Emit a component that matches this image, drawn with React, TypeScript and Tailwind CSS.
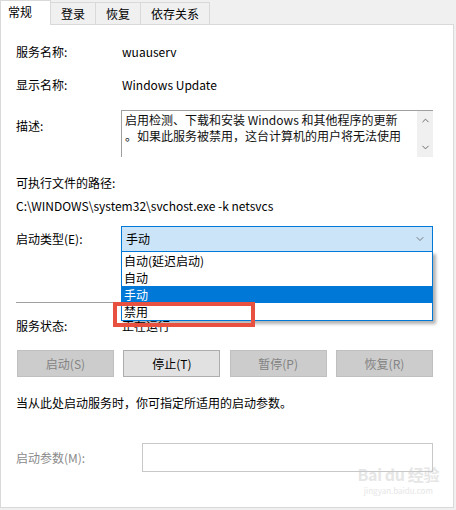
import { ChevronDown, ChevronUp } from "lucide-react";

const font = { fontFamily: '"Noto Sans CJK SC", "Noto Sans", sans-serif' };

function Tab({ label, active }: { label: string; active?: boolean }) {
  if (active) {
    return (
      <div className="h-[25px] w-[51px] bg-white border-l border-t border-r border-[#d9d9d9] pl-[7px] pt-[3px] z-10 -mb-px">
        {label}
      </div>
    );
  }
  return (
    <div className="mt-[2px] h-[22px] px-[10px] bg-[#f0f0f0] border-t border-r border-[#d9d9d9] flex items-center">
      {label}
    </div>
  );
}

function Btn({ label, disabled }: { label: string; disabled?: boolean }) {
  return (
    <div
      className={
        disabled
          ? "w-[97px] h-[27px] flex items-center justify-center bg-[#cccccc] border border-[#bfbfbf] text-[#838383]"
          : "w-[97px] h-[27px] flex items-center justify-center bg-[#e1e1e1] border border-[#adadad] text-black"
      }
    >
      {label}
    </div>
  );
}

export default function App() {
  return (
    <div className="w-[456px] h-[510px] bg-[#f0f0f0] text-[12px] text-black leading-[16px] overflow-hidden" style={font}>
      {/* tabs */}
      <div className="flex h-[24px]">
        <Tab label="常规" active />
        <Tab label="登录" />
        <Tab label="恢复" />
        <Tab label="依存关系" />
      </div>

      {/* panel */}
      <div className="w-[454px] h-[484px] bg-white border border-[#d9d9d9] pl-[15px] pr-[20px] flex flex-col">
        <div className="mt-[19px] flex h-[16px] items-center">
          <div className="w-[106px]">服务名称:</div>
          <div>wuauserv</div>
        </div>
        <div className="mt-[17px] flex h-[16px] items-center">
          <div className="w-[106px]">显示名称:</div>
          <div>Windows Update</div>
        </div>

        <div className="mt-[17px] flex h-[47px]">
          <div className="w-[105px] pt-[8px]">描述:</div>
          <div className="flex-1 flex border-t border-l border-[#a0a0a0]">
            <div className="flex-1 pl-[3px] pt-[1px] leading-[16px] text-[#101010]">
              <div>启用检测、下载和安装 Windows 和其他程序的更新</div>
              <div>。如果此服务被禁用，这台计算机的用户将无法使用</div>
            </div>
            <div className="w-[16px] bg-[#f0f0f0] flex flex-col items-center justify-between py-[4px] text-[#606060]">
              <ChevronUp size={11} strokeWidth={2} />
              <ChevronDown size={11} strokeWidth={2} />
            </div>
          </div>
        </div>

        <div className="mt-[18px] h-[16px]">可执行文件的路径:</div>
        <div className="mt-[7px] h-[16px]">C:\WINDOWS\system32\svchost.exe -k netsvcs</div>

        <div className="mt-[12px] flex h-[26px] items-center">
          <div className="w-[105px]">启动类型(E):</div>
          <div className="relative flex-1 h-[26px]">
            <div className="h-full border border-[#0078d7] bg-[#cce4f7] flex items-center justify-between pl-[4px] pr-[6px]">
              <span>手动</span>
              <ChevronDown size={12} strokeWidth={1.5} className="text-[#555]" />
            </div>
            {/* open list */}
            <div className="absolute left-0 right-0 top-[25px] z-20 bg-white border border-[#0078d7] shadow-[3px_3px_3px_rgba(0,0,0,0.3)] flex flex-col">
              <div className="h-[17px] pl-[2px] flex items-center">自动(延迟启动)</div>
              <div className="h-[17px] pl-[2px] flex items-center">自动</div>
              <div className="h-[17px] pl-[2px] flex items-center bg-[#0078d7] text-white">手动</div>
              <div className="h-[17px] pl-[2px] flex items-center">禁用</div>
            </div>
            {/* red highlight */}
            <div className="absolute left-[-8px] top-[76px] w-[142px] h-[25px] border-[4px] border-[#e8503f] z-30" />
          </div>
        </div>

        <div className="mt-[50px] h-px bg-[#a0a0a0]" />

        <div className="mt-[15px] flex h-[16px] items-center">
          <div className="w-[106px]">服务状态:</div>
          <div>正在运行</div>
        </div>

        <div className="mt-[16px] flex justify-between pl-[1px]">
          <Btn label="启动(S)" disabled />
          <Btn label="停止(T)" />
          <Btn label="暂停(P)" disabled />
          <Btn label="恢复(R)" disabled />
        </div>

        <div className="mt-[18px] h-[16px]">当从此处启动服务时，你可指定所适用的启动参数。</div>

        <div className="relative mt-[32px] flex h-[29px] items-center">
          <div className="w-[126px] text-[#8a8a8a]">启动参数(M):</div>
          <div className="flex-1 h-full border border-[#c8c8c8]" />
        </div>

        {/* watermark */}
        <div className="mt-[-6px] mr-[-6px] self-end flex flex-col items-center text-[#e6e6e6] leading-none">
          <div className="text-[16px] font-bold tracking-tight">Bai du 经验</div>
          <div className="text-[8px] mt-[5px]">jingyan.baidu.com</div>
        </div>
      </div>
    </div>
  );
}
